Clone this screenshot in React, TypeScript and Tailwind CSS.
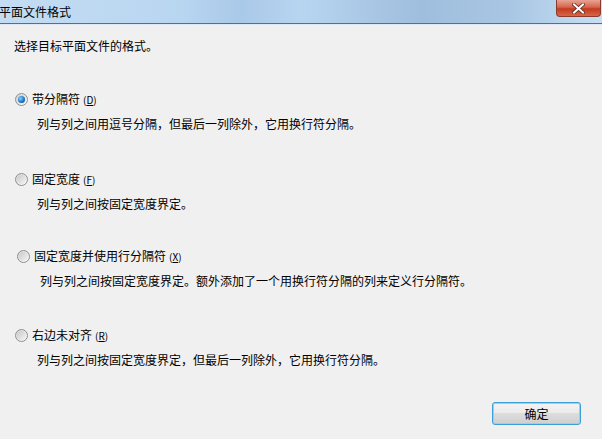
import React from 'react';

const options = [
  { label: '带分隔符', key: 'D', desc: '列与列之间用逗号分隔，但最后一列除外，它用换行符分隔。', checked: true, shift: false, top: 'mt-[37px]' },
  { label: '固定宽度', key: 'F', desc: '列与列之间按固定宽度界定。', checked: false, shift: false, top: 'mt-[39px]' },
  { label: '固定宽度并使用行分隔符', key: 'X', desc: '列与列之间按固定宽度界定。额外添加了一个用换行符分隔的列来定义行分隔符。', checked: false, shift: true, top: 'mt-[36px]' },
  { label: '右边未对齐', key: 'R', desc: '列与列之间按固定宽度界定，但最后一列除外，它用换行符分隔。', checked: false, shift: false, top: 'mt-[38px]' },
];

const Radio = ({ checked }: { checked: boolean }) => (
  <span className="relative w-[13px] h-[13px] rounded-full border border-[#8e8f8f] bg-gradient-to-br from-[#d6d6d6] to-[#fbfbfb] flex items-center justify-center shrink-0">
    <span className="w-[9px] h-[9px] rounded-full bg-gradient-to-br from-[#c9c9c9] to-[#f4f4f4]" />
    {checked && (
      <span className="absolute w-[7px] h-[7px] rounded-full bg-[radial-gradient(circle_at_35%_35%,#7fd0ff,#1a6fc4_60%,#0a3f88)]" />
    )}
  </span>
);

const App = () => {
  return (
    <div className="w-[602px] h-[439px] bg-[#f0f0f0] flex flex-col overflow-hidden text-[12px] text-black" style={{ fontFamily: '"Noto Sans CJK SC", "Liberation Sans", sans-serif' }}>
      <div className="relative h-[24px] shrink-0 bg-[linear-gradient(90deg,#c3dcf2_0%,#b9d6f1_30%,#a9c9e8_40%,#b8d5f0_50%,#9fbedd_70%,#a9c7e4_85%,#c7def2_100%)] border-b border-[#5c6e84] flex items-center">
        <span className="ml-[-1px] leading-none text-[12px]">平面文件格式</span>
        <div className="absolute right-[1px] top-0 w-[45px] h-[17px] rounded-b-[4px] border border-t-0 border-[#8a3a2e] bg-[linear-gradient(180deg,#e8a493_0%,#d5644c_45%,#c43a1e_55%,#d8654a_100%)] flex items-center justify-center">
          <svg width="13" height="11" viewBox="0 0 13 11">
            <path d="M2 1.5 L11 9.5 M11 1.5 L2 9.5" stroke="#5a2a20" strokeWidth="3.6" strokeLinecap="square" />
            <path d="M2 1.5 L11 9.5 M11 1.5 L2 9.5" stroke="#ffffff" strokeWidth="2" strokeLinecap="square" />
          </svg>
        </div>
      </div>
      <div className="h-px bg-[#dfe8f2] shrink-0" />
      <div className="flex flex-col pl-[14px] pt-[13px] flex-1">
        <div className="h-[16px] leading-[16px]">选择目标平面文件的格式。</div>
        {options.map((o) => (
          <div key={o.key} className={o.top}>
            <div className={`flex items-center h-[16px] ${o.shift ? 'pl-[3px]' : 'pl-[1px]'}`}>
              <Radio checked={o.checked} />
              <span className="ml-[4px] leading-[16px]">
                {o.label}
                <span className="ml-[3px] text-[10px]">(<span className="underline">{o.key}</span>)</span>
              </span>
            </div>
            <div className={`h-[16px] leading-[16px] mt-[9px] ${o.shift ? 'pl-[26px]' : 'pl-[23px]'}`}>{o.desc}</div>
          </div>
        ))}
        <div className="flex justify-end pr-[21px] mt-auto mb-[14px]">
          <button className="w-[89px] h-[23px] rounded-[3px] border border-[#3c9fd8] shadow-[inset_0_0_0_1px_#8fd4f5] bg-[linear-gradient(180deg,#f3f3f3_0%,#ebebeb_45%,#dddddd_50%,#cfcfcf_100%)] text-[12px] leading-none">
            确定
          </button>
        </div>
      </div>
    </div>
  );
};

export default App;
